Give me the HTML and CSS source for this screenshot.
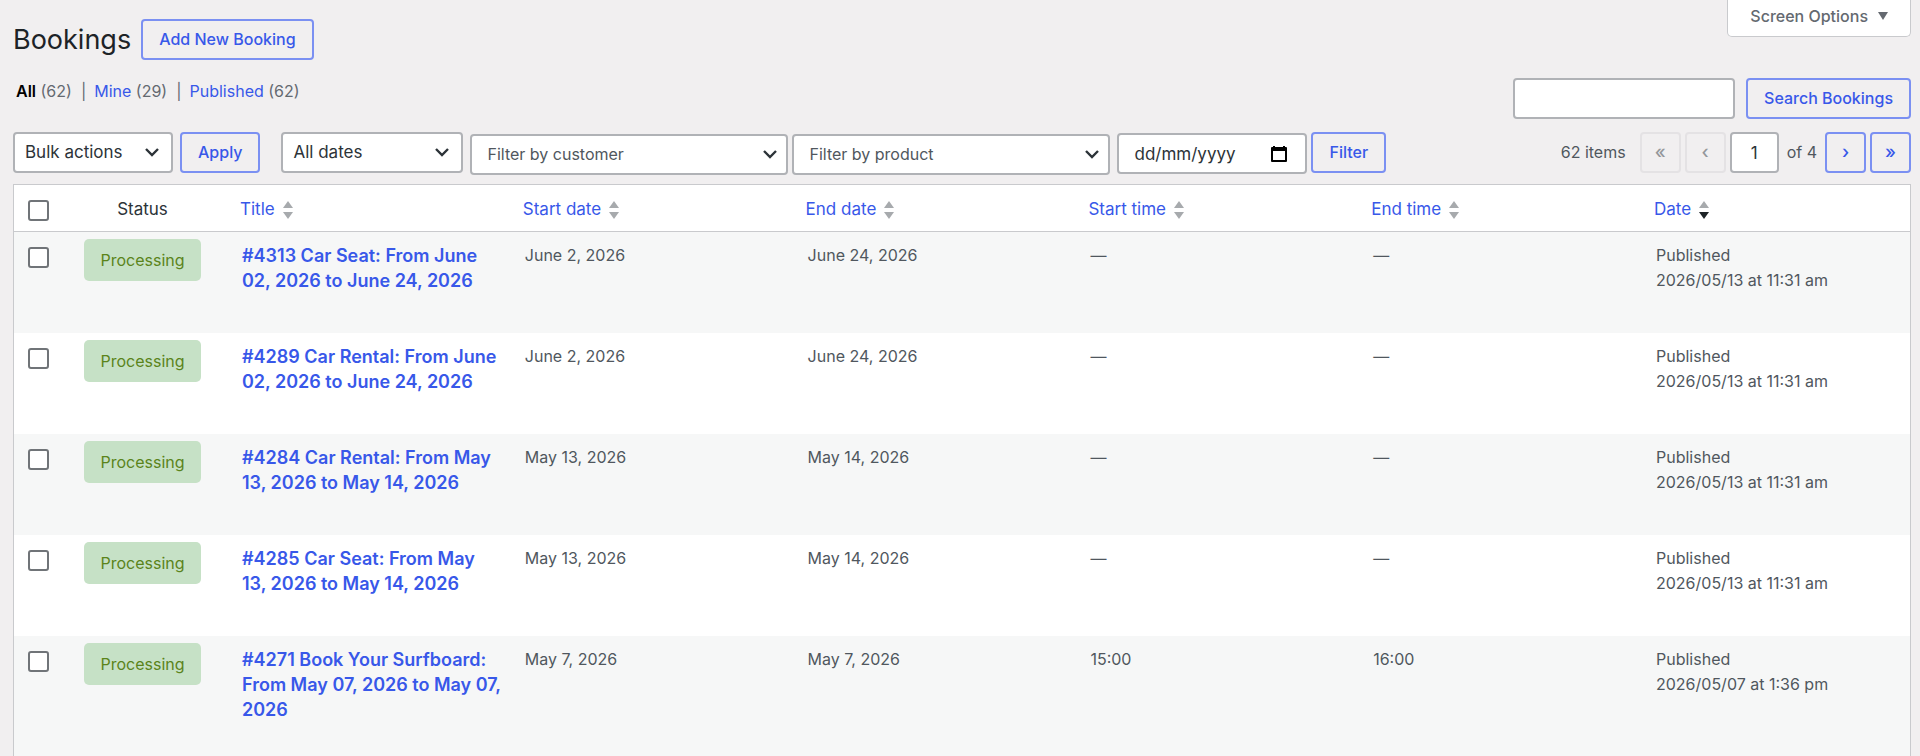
FILE: index.html
```
<!DOCTYPE html>
<html lang="en">
	<head>
		<meta charset="utf-8" />
		<meta name="viewport" content="width=device-width, initial-scale=1.0" />
		<title>Bookings</title>
		<link rel="stylesheet" href="styles.css">
	</head>
	<body>
		<svg class="sprite">
			<symbol id="sort" viewBox="0 0 10 18">
				<path class="up" d="M5 0l5 7H0z" />
				<path class="down" d="M0 11h10l-5 7z" />
			</symbol>
		</svg>

		<main class="wrap">
			<header class="page-head">
				<div class="page-title">
					<h1>Bookings</h1>
					<a class="button" href="#new">Add New Booking</a>
				</div>
				<button type="button" class="screen-options">Screen Options <svg width="10" height="8" viewBox="0 0 10 8"><path d="M0 0h10L5 8z" /></svg></button>
			</header>

			<div class="sub-head">
				<ul class="views">
					<li><a class="current" href="#all">All</a> (62)</li>
					<li><a href="#mine">Mine</a> (29)</li>
					<li><a href="#published">Published</a> (62)</li>
				</ul>
				<form class="search">
					<input type="search" aria-label="Search Bookings" />
					<button type="button" class="button">Search Bookings</button>
				</form>
			</div>

			<div class="tablenav">
				<div class="actions">
					<select class="bulk" aria-label="Select bulk action">
						<option>Bulk actions</option>
					</select>
					<button type="button" class="button">Apply</button>
				</div>
				<div class="actions">
					<select class="dates" aria-label="Filter by date">
						<option>All dates</option>
					</select>
					<div class="pair">
						<select class="lookup" aria-label="Filter by customer">
							<option>Filter by customer</option>
						</select>
						<select class="lookup" aria-label="Filter by product">
							<option>Filter by product</option>
						</select>
					</div>
					<div class="pair">
						<label class="date-field">
							<input type="text" placeholder="dd/mm/yyyy" aria-label="Booking date" />
							<svg width="16" height="16" viewBox="0 0 16 16"><path fill-rule="evenodd" d="M2 1V0h2v1h8V0h2v1h1q1 0 1 1v13q0 1-1 1H1q-1 0-1-1V2q0-1 1-1zM2 5v9h12V5z" /></svg>
						</label>
						<button type="button" class="button">Filter</button>
					</div>
				</div>
				<nav class="pages" aria-label="Pagination">
					<span class="count">62 items</span>
					<button type="button" class="button page" disabled="">«</button>
					<button type="button" class="button page" disabled="">‹</button>
					<input type="text" class="current-page" value="1" aria-label="Current page" />
					<span class="total">of 4</span>
					<a class="button page" href="#next">›</a>
					<a class="button page" href="#last">»</a>
				</nav>
			</div>

			<table class="bookings">
				<colgroup>
					<col class="col-check" />
					<col class="col-status" />
					<col span="5" />
					<col class="col-date" />
				</colgroup>
				<thead>
					<tr>
						<th class="check"><input type="checkbox" aria-label="Select all" /></th>
						<th class="status">Status</th>
						<th><a href="#title">Title <svg class="sort"><use href="#sort" /></svg></a></th>
						<th><a href="#start-date">Start date <svg class="sort"><use href="#sort" /></svg></a></th>
						<th><a href="#end-date">End date <svg class="sort"><use href="#sort" /></svg></a></th>
						<th><a href="#start-time">Start time <svg class="sort"><use href="#sort" /></svg></a></th>
						<th><a href="#end-time">End time <svg class="sort"><use href="#sort" /></svg></a></th>
						<th><a href="#date">Date <svg class="sort -desc"><use href="#sort" /></svg></a></th>
					</tr>
				</thead>
				<tbody>
					<tr>
						<td class="check"><input type="checkbox" aria-label="Select #4313" /></td>
						<td class="status"><mark>Processing</mark></td>
						<td class="title"><a href="#4313">#4313 Car Seat: From June 02, 2026 to June 24, 2026</a></td>
						<td>June 2, 2026</td>
						<td>June 24, 2026</td>
						<td>—</td>
						<td>—</td>
						<td>Published<br />2026/05/13 at 11:31 am</td>
					</tr>
					<tr>
						<td class="check"><input type="checkbox" aria-label="Select #4289" /></td>
						<td class="status"><mark>Processing</mark></td>
						<td class="title"><a href="#4289">#4289 Car Rental: From June 02, 2026 to June 24, 2026</a></td>
						<td>June 2, 2026</td>
						<td>June 24, 2026</td>
						<td>—</td>
						<td>—</td>
						<td>Published<br />2026/05/13 at 11:31 am</td>
					</tr>
					<tr>
						<td class="check"><input type="checkbox" aria-label="Select #4284" /></td>
						<td class="status"><mark>Processing</mark></td>
						<td class="title"><a href="#4284">#4284 Car Rental: From May 13, 2026 to May 14, 2026</a></td>
						<td>May 13, 2026</td>
						<td>May 14, 2026</td>
						<td>—</td>
						<td>—</td>
						<td>Published<br />2026/05/13 at 11:31 am</td>
					</tr>
					<tr>
						<td class="check"><input type="checkbox" aria-label="Select #4285" /></td>
						<td class="status"><mark>Processing</mark></td>
						<td class="title"><a href="#4285">#4285 Car Seat: From May 13, 2026 to May 14, 2026</a></td>
						<td>May 13, 2026</td>
						<td>May 14, 2026</td>
						<td>—</td>
						<td>—</td>
						<td>Published<br />2026/05/13 at 11:31 am</td>
					</tr>
					<tr>
						<td class="check"><input type="checkbox" aria-label="Select #4271" /></td>
						<td class="status"><mark>Processing</mark></td>
						<td class="title"><a href="#4271">#4271 Book Your Surfboard: From May 07, 2026 to May 07, 2026</a></td>
						<td>May 7, 2026</td>
						<td>May 7, 2026</td>
						<td>15:00</td>
						<td>16:00</td>
						<td>Published<br />2026/05/07 at 1:36 pm</td>
					</tr>
				</tbody>
			</table>
		</main>
	</body>
</html>
```
FILE: styles.css
```
* {
	box-sizing: border-box;
}

body {
	margin: 0;
	color: #50575e;
	background-color: #f1eff0;
	font: 16px/25px Inter, "Liberation Sans", sans-serif;
}

a {
	color: #3858e9;
	text-decoration: none;
}

input,
select,
button {
	margin: 0;
	font: inherit;
}

.sprite {
	display: none;
}

.wrap {
	height: 100vh;
	padding: 0 9px 0 13px;
	overflow: hidden;
}

/* Form controls */
.button {
	display: inline-flex;
	align-items: center;
	justify-content: center;
	height: 41px;
	padding: 0 16px;
	border: 2px solid #7b90f2;
	border-radius: 4px;
	color: #3858e9;
	background-color: transparent;
	font-weight: 500;
	white-space: nowrap;
}

.button:disabled {
	border-color: #e4e2e4;
	color: #94979b;
}

input[type="text"],
input[type="search"],
select {
	height: 41px;
	border: 2px solid #b0b2b6;
	border-radius: 4px;
	color: #2c3338;
	background-color: #fff;
	font-size: 17px;
}

select {
	padding: 0 32px 0 10px;
	background: #fff url("data:image/svg+xml,%3Csvg xmlns='http://www.w3.org/2000/svg' width='14' height='9' fill='none' stroke='%232c3338' stroke-width='2.4'%3E%3Cpath d='M1 1l6 6 6-6'/%3E%3C/svg%3E") no-repeat right 12px center;
	appearance: none;
}

input[type="checkbox"] {
	display: block;
	width: 21px;
	height: 21px;
	border: 2px solid #707478;
	border-radius: 3px;
	background-color: #fff;
	appearance: none;
}

/* Heading */
.page-head {
	display: flex;
	align-items: flex-start;
	justify-content: space-between;
}

.page-title {
	display: flex;
	align-items: center;
	gap: 10px;
	padding-top: 19px;
}

h1 {
	margin: 0;
	color: #1d2327;
	font-size: 27px;
	font-weight: 400;
	line-height: 41px;
}

.screen-options {
	display: flex;
	align-items: center;
	gap: 10px;
	height: 37px;
	padding: 0 22px 4px;
	border: 1px solid #c9cacd;
	border-top: none;
	border-radius: 0 0 5px 5px;
	color: #646970;
	background-color: #fff;
	font-weight: 500;
}

.screen-options svg {
	fill: #646970;
}

.sub-head {
	display: flex;
	justify-content: space-between;
	padding-top: 18px;
}

.views {
	display: flex;
	margin: 0;
	padding: 1px 0 0 3px;
	color: #646970;
	list-style: none;
}

.views li + li::before {
	content: "|";
	padding: 0 8px 0 9px;
}

.views .current {
	color: #000;
	font-weight: 600;
}

.search {
	display: flex;
	gap: 11px;
}

.search input {
	width: 222px;
}

/* Filters and pagination */
.tablenav {
	display: flex;
	align-items: flex-start;
	gap: 21px;
	padding: 13px 0 9px;
}

.actions {
	display: flex;
	gap: 7px;
}

.pair {
	display: flex;
	gap: 4px;
}

.bulk {
	width: 160px;
}

.dates {
	width: 182px;
}

select.lookup {
	width: 318px;
	margin-top: 2px;
	padding-left: 15px;
	background-position-x: calc(100% - 9px);
	color: #50575e;
	font-size: 16px;
}

.date-field {
	display: flex;
	align-items: center;
}

.date-field input {
	width: 190px;
	padding: 0 15px;
}

.date-field input::placeholder {
	color: #2c3338;
}

.date-field svg {
	margin: 0 20px 0 -36px;
}

.pages {
	display: flex;
	align-items: center;
	gap: 4px;
	margin-left: auto;
}

.page {
	width: 41px;
	padding: 0 0 3px;
	font-size: 18px;
}

.count {
	margin-right: 10px;
}

.current-page {
	width: 49px;
	text-align: center;
}

.total {
	padding: 0 4px;
}

/* List */
.bookings {
	width: 100%;
	border: 1px solid #c9cacd;
	border-spacing: 0;
	background-color: #fff;
	table-layout: fixed;
}

.col-check {
	width: 42px;
}

.col-status {
	width: 173px;
}

.col-date {
	width: 267px;
}

th {
	padding: 12px 11px 9px;
	border-bottom: 1px solid #c9cacd;
	color: #2c3338;
	font-size: 17px;
	font-weight: 400;
	text-align: start;
}

th a {
	display: flex;
	align-items: center;
	gap: 8px;
}

.sort {
	width: 10px;
	height: 18px;
	color: #a7aaad;
}

.sort.-desc {
	color: #1d2327;
}

.up {
	fill: #a7aaad;
}

.down {
	fill: currentColor;
}

td {
	padding: 11px 10px 10px 13px;
	vertical-align: top;
}

tbody tr:nth-child(odd) {
	background-color: #f6f7f7;
}

.check {
	padding: 15px 0 0 14px;
	vertical-align: top;
}

.status {
	text-align: center;
}

td.status {
	padding: 7px 0 0;
}

mark {
	display: inline-block;
	padding: 0 16px;
	border-radius: 5px;
	color: #5b841b;
	background-color: #c6e1c6;
	line-height: 42px;
}

.title {
	padding-bottom: 40px;
	font-size: 18px;
	font-weight: 600;
}
```
